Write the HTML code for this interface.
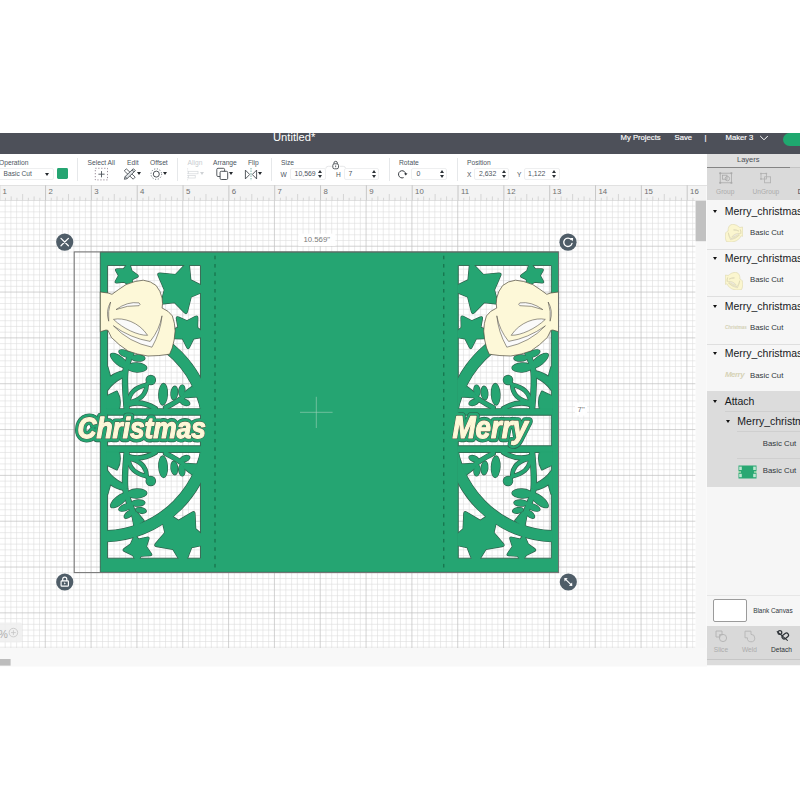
<!DOCTYPE html>
<html lang="en">
<head>
<meta charset="utf-8">
<title>Untitled* - Design Space</title>
<style>
html,body{margin:0;padding:0;}
body{width:800px;height:800px;position:relative;overflow:hidden;background:#fff;font-family:"Liberation Sans",sans-serif;color:#3c4248;}
.abs{position:absolute;}
#hdr{left:0;top:133px;width:800px;height:20.5px;background:#4d5059;}
#hdr span{position:absolute;color:#fff;font-size:7.7px;-webkit-text-stroke:0.15px #fff;line-height:10px;top:0px;white-space:nowrap;}
#title{font-size:11.2px !important;-webkit-text-stroke:0 !important;}
#go{position:absolute;left:782.5px;top:0;width:30px;height:13px;border-radius:7px;background:#1fa86f;}
#tb{left:0;top:153.5px;width:707px;height:31.5px;background:#fff;}
.lbl{position:absolute;top:4.3px;font-size:6.7px;line-height:9px;color:#4c5560;white-space:nowrap;}
.lbl.dis{color:#c9cdd1;}
.sm{position:absolute;top:16.4px;font-size:6.6px;line-height:9px;color:#4c5560;white-space:nowrap;}
.inp{position:absolute;top:14.8px;height:11.5px;border:0.6px solid #eeeff0;border-radius:2px;box-sizing:border-box;background:#fff;}
.inp b{position:absolute;left:3.6px;top:-0.5px;font-weight:normal;font-size:6.9px;line-height:9px;color:#4c5560;}
.inp i{position:absolute;right:1.9px;top:1.2px;width:4.4px;height:7.8px;}
.inp i:before,.inp i:after{content:"";position:absolute;left:0;border-left:2.2px solid transparent;border-right:2.2px solid transparent;}
.inp i:before{top:0;border-bottom:3.3px solid #2d3237;}
.inp i:after{bottom:0;border-top:3.3px solid #2d3237;}
.div{position:absolute;top:4.5px;width:1px;height:23px;background:#e6e8ea;}
.car{position:absolute;top:18.5px;width:0;height:0;border-left:2.2px solid transparent;border-right:2.2px solid transparent;border-top:3.4px solid #24282c;}
.car.dis{border-top-color:#cfd2d5;}
#canvas{left:0;top:185px;width:707px;height:481.5px;}
#panel{left:706.5px;top:153.5px;width:94px;height:512px;background:#f6f6f6;}
#panel .t{position:absolute;margin-top:1.1px;font-size:10.5px;line-height:13px;color:#16191c;white-space:nowrap;}
#panel .c{position:absolute;font-size:7.8px;line-height:10px;color:#30363b;white-space:nowrap;}
#panel .sep{position:absolute;height:1px;background:#dfdfdf;right:0;}
#panel .tri{position:absolute;width:0;height:0;border-left:2.6px solid transparent;border-right:2.6px solid transparent;border-top:3.2px solid #111;margin-top:0.2px;}
#panel .g{position:absolute;font-size:6.6px;line-height:9px;color:#acacac;white-space:nowrap;}
</style>
</head>
<body>
<div id="hdr" class="abs">
  <span id="title" style="left:273px;top:-1px;">Untitled*</span>
  <span style="left:620.5px;">My Projects</span>
  <span style="left:674.5px;">Save</span>
  <span style="left:704.5px;">|</span>
  <span style="left:725.5px;">Maker 3</span>
  <svg class="abs" style="left:759px;top:1px" width="10" height="8" viewBox="0 0 10 8"><path d="M1.2 2 L5 5.8 L8.8 2" fill="none" stroke="#fff" stroke-width="1"/></svg>
  <div id="go"></div>
</div>

<div id="tb" class="abs">
  <svg class="abs" style="left:0;top:0" width="707" height="31.5" viewBox="0 153.5 707 31.5">
  <!-- select all -->
  <rect x="95.300" y="167.800" width="12.200" height="11.600" fill="none" stroke="#8d7f8c" stroke-width="0.9" stroke-dasharray="1.200 1.775"/>
  <path d="M98.400 173.700h6.200M101.500 170.600v6.200" stroke="#4b5158" stroke-width="0.9" fill="none"/>
  <!-- edit -->
  <g stroke="#3a4046" stroke-width="0.8" fill="#fff" stroke-linejoin="round">
    <path d="M126.300 168.300l8.900 8.300l-2 2.100l-8.900-8.300z"/>
    <path d="M133.400 168.200l2 2l-8.400 8l-2.600 0.600l0.600-2.600z" fill="#dfe3e6"/>
    <path d="M132.100 169.400l2 2M127.100 178.100l-2-2" fill="none"/>
  </g>
  <!-- offset -->
  <circle cx="156.300" cy="173.600" r="3" fill="none" stroke="#3a4046" stroke-width="0.9"/>
  <circle cx="156.300" cy="173.600" r="5.300" fill="none" stroke="#59606a" stroke-width="1" stroke-dasharray="1 1.775"/>
  <!-- align (disabled) -->
  <path d="M187.600 167.800v12" stroke="#d9dcdf" stroke-width="0.8" stroke-dasharray="1.200 1" fill="none"/>
  <rect x="188.600" y="170.800" width="9.400" height="2.500" fill="none" stroke="#d4d8db" stroke-width="0.7"/>
  <rect x="188.600" y="175" width="6.600" height="2.500" fill="none" stroke="#d4d8db" stroke-width="0.7"/>
  <!-- arrange -->
  <rect x="216.800" y="167.800" width="7.800" height="8.200" rx="1.200" fill="#fff" stroke="#3a4046" stroke-width="0.85"/>
  <rect x="220.100" y="170.800" width="7.600" height="8.200" rx="1.200" fill="#fff" stroke="#3a4046" stroke-width="0.9"/>
  <!-- flip -->
  <path d="M245.400 169.600v8.800l4.300-4.400zM256.600 169.600v8.800l-4.300-4.400z" fill="#fff" stroke="#3a4046" stroke-width="0.85" stroke-linejoin="round"/>
  <path d="M251 167.500v12.600" stroke="#4f9a8c" stroke-width="0.8" stroke-dasharray="1.400 1.100" fill="none"/>
  <!-- lock + bracket -->
  <path d="M325.800 168.200q0-2.400 2.400-2.400h3.600M339.600 165.800h3.600q2.400 0 2.400 2.400" fill="none" stroke="#dfe1e3" stroke-width="0.8"/>
  <rect x="332.800" y="163.300" width="5.700" height="5" rx="1.600" fill="#fff" stroke="#3a4046" stroke-width="0.85"/>
  <path d="M333.900 163.300v-0.700a1.750 1.750 0 0 1 3.500 0v0.700" fill="none" stroke="#3a4046" stroke-width="0.85"/>
  <path d="M335.650 165v1.700" stroke="#3a4046" stroke-width="0.8"/>
  <!-- rotate -->
  <path d="M403.600 177.100a3.600 3.600 0 1 1 2.100-3.400" fill="none" stroke="#2d3237" stroke-width="0.95"/>
  <path d="M404 172.900l1.800 2.100l1.700-2.200z" fill="#2d3237"/>
</svg>
<div class="car" style="left:136.800px;"></div>
<div class="car" style="left:163.300px;"></div>
<div class="car dis" style="left:199.800px;"></div>
<div class="car" style="left:228.800px;"></div>
<div class="car" style="left:257.800px;"></div>

  <span class="lbl" style="left:-1px;">Operation</span>
  <div class="inp" style="left:-4px;width:57.5px;"><b style="left:6.6px;font-size:6.6px;">Basic Cut</b></div>
  <div class="car" style="left:45px;top:19px;"></div>
  <div class="abs" style="left:57px;top:14.3px;width:10.6px;height:11.2px;border-radius:1.4px;background:#25a572;"></div>
  <div class="div" style="left:77px;"></div>
  <span class="lbl" style="left:87.5px;">Select All</span>
  <span class="lbl" style="left:127px;">Edit</span>
  <span class="lbl" style="left:150px;">Offset</span>
  <div class="div" style="left:177px;"></div>
  <span class="lbl dis" style="left:187.5px;">Align</span>
  <span class="lbl" style="left:213px;">Arrange</span>
  <span class="lbl" style="left:248px;">Flip</span>
  <div class="div" style="left:271px;"></div>
  <span class="lbl" style="left:281px;">Size</span>
  <span class="sm" style="left:280.5px;">W</span>
  <div class="inp" style="left:290px;width:35.6px;"><b>10,569</b><i></i></div>
  <span class="sm" style="left:336px;">H</span>
  <div class="inp" style="left:343.8px;width:35.6px;"><b>7</b><i></i></div>
  <div class="div" style="left:389px;"></div>
  <span class="lbl" style="left:399px;">Rotate</span>
  <div class="inp" style="left:411px;width:36px;"><b style="left:4.6px">0</b><i></i></div>
  <div class="div" style="left:457px;"></div>
  <span class="lbl" style="left:467px;">Position</span>
  <span class="sm" style="left:467px;">X</span>
  <div class="inp" style="left:474.4px;width:35px;"><b>2,632</b><i></i></div>
  <span class="sm" style="left:517px;">Y</span>
  <div class="inp" style="left:523.5px;width:36px;"><b>1,122</b><i></i></div>
</div>

<div id="canvas" class="abs">
<svg id="cv" width="707" height="482" viewBox="0 185 707 482" style="position:absolute;left:0;top:0;font-family:'Liberation Sans',sans-serif">
  <defs>
    <pattern id="minor" x="-46.4" y="200.4" width="5.729" height="5.729" patternUnits="userSpaceOnUse">
      <path d="M0.25 0V5.729M0 0.25H5.729" stroke="#dcdcdc" stroke-width="0.6" fill="none"/>
    </pattern>
    <pattern id="major" x="-46.4" y="200.4" width="45.83" height="45.83" patternUnits="userSpaceOnUse">
      <path d="M0.3 0V45.83M0 0.3H45.83" stroke="#c4c4c4" stroke-width="0.8" fill="none"/>
    </pattern>
  </defs>
  <rect x="0" y="185" width="707" height="482" fill="#ffffff"/>
  <path d="M5.16 200.4V648M10.89 200.4V648M16.62 200.4V648M22.35 200.4V648M28.07 200.4V648M33.80 200.4V648M39.53 200.4V648M50.99 200.4V648M56.72 200.4V648M62.45 200.4V648M68.17 200.4V648M73.90 200.4V648M79.63 200.4V648M85.36 200.4V648M96.82 200.4V648M102.55 200.4V648M108.28 200.4V648M114.00 200.4V648M119.73 200.4V648M125.46 200.4V648M131.19 200.4V648M142.65 200.4V648M148.38 200.4V648M154.11 200.4V648M159.83 200.4V648M165.56 200.4V648M171.29 200.4V648M177.02 200.4V648M188.48 200.4V648M194.21 200.4V648M199.94 200.4V648M205.66 200.4V648M211.39 200.4V648M217.12 200.4V648M222.85 200.4V648M234.31 200.4V648M240.04 200.4V648M245.77 200.4V648M251.49 200.4V648M257.22 200.4V648M262.95 200.4V648M268.68 200.4V648M280.14 200.4V648M285.87 200.4V648M291.60 200.4V648M297.32 200.4V648M303.05 200.4V648M308.78 200.4V648M314.51 200.4V648M325.97 200.4V648M331.70 200.4V648M337.43 200.4V648M343.16 200.4V648M348.88 200.4V648M354.61 200.4V648M360.34 200.4V648M371.80 200.4V648M377.53 200.4V648M383.26 200.4V648M388.99 200.4V648M394.71 200.4V648M400.44 200.4V648M406.17 200.4V648M417.63 200.4V648M423.36 200.4V648M429.09 200.4V648M434.81 200.4V648M440.54 200.4V648M446.27 200.4V648M452.00 200.4V648M463.46 200.4V648M469.19 200.4V648M474.92 200.4V648M480.64 200.4V648M486.37 200.4V648M492.10 200.4V648M497.83 200.4V648M509.29 200.4V648M515.02 200.4V648M520.75 200.4V648M526.48 200.4V648M532.20 200.4V648M537.93 200.4V648M543.66 200.4V648M555.12 200.4V648M560.85 200.4V648M566.58 200.4V648M572.30 200.4V648M578.03 200.4V648M583.76 200.4V648M589.49 200.4V648M600.95 200.4V648M606.68 200.4V648M612.41 200.4V648M618.13 200.4V648M623.86 200.4V648M629.59 200.4V648M635.32 200.4V648M646.78 200.4V648M652.51 200.4V648M658.24 200.4V648M663.97 200.4V648M669.69 200.4V648M675.42 200.4V648M681.15 200.4V648M692.61 200.4V648M0 206.13H695.6M0 211.86H695.6M0 217.59H695.6M0 223.31H695.6M0 229.04H695.6M0 234.77H695.6M0 240.50H695.6M0 251.96H695.6M0 257.69H695.6M0 263.42H695.6M0 269.14H695.6M0 274.87H695.6M0 280.60H695.6M0 286.33H695.6M0 297.79H695.6M0 303.52H695.6M0 309.25H695.6M0 314.98H695.6M0 320.70H695.6M0 326.43H695.6M0 332.16H695.6M0 343.62H695.6M0 349.35H695.6M0 355.08H695.6M0 360.81H695.6M0 366.53H695.6M0 372.26H695.6M0 377.99H695.6M0 389.45H695.6M0 395.18H695.6M0 400.91H695.6M0 406.63H695.6M0 412.36H695.6M0 418.09H695.6M0 423.82H695.6M0 435.28H695.6M0 441.01H695.6M0 446.74H695.6M0 452.47H695.6M0 458.19H695.6M0 463.92H695.6M0 469.65H695.6M0 481.11H695.6M0 486.84H695.6M0 492.57H695.6M0 498.29H695.6M0 504.02H695.6M0 509.75H695.6M0 515.48H695.6M0 526.94H695.6M0 532.67H695.6M0 538.40H695.6M0 544.12H695.6M0 549.85H695.6M0 555.58H695.6M0 561.31H695.6M0 572.77H695.6M0 578.50H695.6M0 584.23H695.6M0 589.96H695.6M0 595.68H695.6M0 601.41H695.6M0 607.14H695.6M0 618.60H695.6M0 624.33H695.6M0 630.06H695.6M0 635.78H695.6M0 641.51H695.6M0 647.24H695.6" stroke="#dddddd" stroke-width="0.58" fill="none"/>
<path d="M45.26 200.4V648M91.09 200.4V648M136.92 200.4V648M182.75 200.4V648M228.58 200.4V648M274.41 200.4V648M320.24 200.4V648M366.07 200.4V648M411.90 200.4V648M457.73 200.4V648M503.56 200.4V648M549.39 200.4V648M595.22 200.4V648M641.05 200.4V648M686.88 200.4V648M0 200.40H695.6M0 246.23H695.6M0 292.06H695.6M0 337.89H695.6M0 383.72H695.6M0 429.55H695.6M0 475.38H695.6M0 521.21H695.6M0 567.04H695.6M0 612.87H695.6" stroke="#c0c0c0" stroke-width="0.7" fill="none"/>
  <rect x="0" y="185" width="706.5" height="15.3" fill="#f3f3f3"/>
<rect x="0" y="185" width="707" height="0.7" fill="#d9d9d9"/>
<path d="M5.46 197.8V200.4M11.19 196.4V200.4M16.92 197.8V200.4M22.65 194V200.4M28.37 197.8V200.4M34.10 196.4V200.4M39.83 197.8V200.4M51.29 197.8V200.4M57.02 196.4V200.4M62.75 197.8V200.4M68.47 194V200.4M74.20 197.8V200.4M79.93 196.4V200.4M85.66 197.8V200.4M97.12 197.8V200.4M102.85 196.4V200.4M108.58 197.8V200.4M114.30 194V200.4M120.03 197.8V200.4M125.76 196.4V200.4M131.49 197.8V200.4M142.95 197.8V200.4M148.68 196.4V200.4M154.41 197.8V200.4M160.13 194V200.4M165.86 197.8V200.4M171.59 196.4V200.4M177.32 197.8V200.4M188.78 197.8V200.4M194.51 196.4V200.4M200.24 197.8V200.4M205.97 194V200.4M211.69 197.8V200.4M217.42 196.4V200.4M223.15 197.8V200.4M234.61 197.8V200.4M240.34 196.4V200.4M246.07 197.8V200.4M251.79 194V200.4M257.52 197.8V200.4M263.25 196.4V200.4M268.98 197.8V200.4M280.44 197.8V200.4M286.17 196.4V200.4M291.90 197.8V200.4M297.62 194V200.4M303.35 197.8V200.4M309.08 196.4V200.4M314.81 197.8V200.4M326.27 197.8V200.4M332.00 196.4V200.4M337.73 197.8V200.4M343.46 194V200.4M349.18 197.8V200.4M354.91 196.4V200.4M360.64 197.8V200.4M372.10 197.8V200.4M377.83 196.4V200.4M383.56 197.8V200.4M389.29 194V200.4M395.01 197.8V200.4M400.74 196.4V200.4M406.47 197.8V200.4M417.93 197.8V200.4M423.66 196.4V200.4M429.39 197.8V200.4M435.12 194V200.4M440.84 197.8V200.4M446.57 196.4V200.4M452.30 197.8V200.4M463.76 197.8V200.4M469.49 196.4V200.4M475.22 197.8V200.4M480.94 194V200.4M486.67 197.8V200.4M492.40 196.4V200.4M498.13 197.8V200.4M509.59 197.8V200.4M515.32 196.4V200.4M521.05 197.8V200.4M526.77 194V200.4M532.50 197.8V200.4M538.23 196.4V200.4M543.96 197.8V200.4M555.42 197.8V200.4M561.15 196.4V200.4M566.88 197.8V200.4M572.60 194V200.4M578.33 197.8V200.4M584.06 196.4V200.4M589.79 197.8V200.4M601.25 197.8V200.4M606.98 196.4V200.4M612.71 197.8V200.4M618.43 194V200.4M624.16 197.8V200.4M629.89 196.4V200.4M635.62 197.8V200.4M647.08 197.8V200.4M652.81 196.4V200.4M658.54 197.8V200.4M664.26 194V200.4M669.99 197.8V200.4M675.72 196.4V200.4M681.45 197.8V200.4M692.91 197.8V200.4" stroke="#c9c9c9" stroke-width="0.7" fill="none"/>
<path d="M-0.27 185.3V200.4M45.56 185.3V200.4M91.39 185.3V200.4M137.22 185.3V200.4M183.05 185.3V200.4M228.88 185.3V200.4M274.71 185.3V200.4M320.54 185.3V200.4M366.37 185.3V200.4M412.20 185.3V200.4M458.03 185.3V200.4M503.86 185.3V200.4M549.69 185.3V200.4M595.52 185.3V200.4M641.35 185.3V200.4M687.18 185.3V200.4" stroke="#bdbdbd" stroke-width="0.8" fill="none"/>
<g font-size="7.8" fill="#6f6f6f"><text x="2.6" y="193.9">1</text><text x="48.5" y="193.9">2</text><text x="94.3" y="193.9">3</text><text x="140.1" y="193.9">4</text><text x="185.9" y="193.9">5</text><text x="231.8" y="193.9">6</text><text x="277.6" y="193.9">7</text><text x="323.4" y="193.9">8</text><text x="369.3" y="193.9">9</text><text x="415.1" y="193.9">10</text><text x="460.9" y="193.9">11</text><text x="506.8" y="193.9">12</text><text x="552.6" y="193.9">13</text><text x="598.4" y="193.9">14</text><text x="644.2" y="193.9">15</text><text x="690.1" y="193.9">16</text></g>
  <defs><clipPath id="winclip"><rect x="107.5" y="265.5" width="93.0" height="292.70000000000005"/></clipPath><clipPath id="winclip2"><rect x="106.7" y="264.7" width="94.6" height="294.30000000000007"/></clipPath></defs>
<path d="M100.3 252.0H558.5V572.3H100.3ZM107.5 265.5V558.2H200.5V265.5ZM458.29999999999995 265.5V558.2H551.3V265.5Z" fill="#25a572" fill-rule="evenodd" stroke="#33624e" stroke-width="0.9"/>
<g id="lp"><g clip-path="url(#winclip)">
<path d="M-8.600000000000009 430.5A111.2 111.2 0 1 0 213.8 430.5A111.2 111.2 0 1 0 -8.600000000000009 430.5ZM2.299999999999997 430.5A100.3 100.3 0 1 1 202.89999999999998 430.5A100.3 100.3 0 1 1 2.299999999999997 430.5Z" fill="#33624e" fill-rule="evenodd" stroke="#33624e" stroke-width="1.35"/>
<path d="M126.6 408 C125.8 398 124.2 384 125.3 372 C126.5 362 131.5 354 134.5 345 L137 336" fill="none" stroke="#33624e" stroke-width="6.35" stroke-linecap="round" stroke-linejoin="round"/>
<polygon points="136.2,349.3 143.6,340.2 134.4,333.7 132.6,346.7" fill="#33624e" stroke="#33624e" stroke-width="2.15" stroke-linejoin="round"/>
<ellipse cx="119.3" cy="360.8" rx="11.48" ry="4.77" transform="rotate(39 119.3 360.8)" fill="#33624e"/>
<ellipse cx="136.8" cy="367.5" rx="10.68" ry="5.17" transform="rotate(3 136.8 367.5)" fill="#33624e"/>
<ellipse cx="125.4" cy="353.6" rx="7.58" ry="3.67" transform="rotate(22 125.4 353.6)" fill="#33624e"/>
<ellipse cx="138.1" cy="358.0" rx="7.47" ry="3.78" transform="rotate(3 138.1 358.0)" fill="#33624e"/>
<ellipse cx="128.9" cy="346.9" rx="6.27" ry="3.38" transform="rotate(40 128.9 346.9)" fill="#33624e"/>
<ellipse cx="140.9" cy="350.6" rx="6.08" ry="3.38" transform="rotate(-10 140.9 350.6)" fill="#33624e"/>
<path d="M124 371 Q115.5 372.6 110.3 377 L107.5 367 L105 367 L105 390.6 L107.5 390 Q112.2 382.6 123.4 376.8 Z" fill="#33624e" stroke="#33624e" stroke-width="1.95" stroke-linejoin="round"/>
<path d="M105 397 L107.5 395.8 L116.9 391.4 Q121.6 399.5 118.9 409 L105 409 Z" fill="#33624e" stroke="#33624e" stroke-width="1.95" stroke-linejoin="round"/>
<path d="M128.3 402.6 Q129.6 388.2 146.6 384.8 Q146.2 399.4 128.3 402.6 Z" fill="none" stroke="#33624e" stroke-width="4.65" stroke-linecap="round" stroke-linejoin="round"/>
<path d="M146.4 385 L150.4 380.4" fill="none" stroke="#33624e" stroke-width="4.35" stroke-linecap="round" stroke-linejoin="round"/>
<ellipse cx="150.8" cy="380.0" rx="5.27" ry="5.27" transform="rotate(0 150.8 380.0)" fill="#33624e"/>
<path d="M126.4 405.2 Q140.5 399.6 155.4 408.6" fill="none" stroke="#33624e" stroke-width="5.35" stroke-linecap="round" stroke-linejoin="round"/>
<ellipse cx="163.1" cy="394.2" rx="4.97" ry="11.48" transform="rotate(3 163.1 394.2)" fill="#33624e"/>
<path d="M165.5 407.6 Q178.5 401.2 186.5 394.2 L193 389.6" fill="none" stroke="#33624e" stroke-width="5.35" stroke-linecap="round" stroke-linejoin="round"/>
<ellipse cx="174.3" cy="393.0" rx="3.97" ry="7.47" transform="rotate(6 174.3 393.0)" fill="#33624e"/>
<ellipse cx="181.8" cy="390.6" rx="3.67" ry="6.27" transform="rotate(9 181.8 390.6)" fill="#33624e"/>
<ellipse cx="184.8" cy="402.3" rx="5.88" ry="3.47" transform="rotate(21 184.8 402.3)" fill="#33624e"/>
<polygon points="183.4,393.4 192.4,386.6 198,396.4 186.2,397.2" fill="#33624e" stroke="#33624e" stroke-width="2.15" stroke-linejoin="round"/>
<path d="M105.5 409 H202.5 V414.8 H105.5 Z" fill="#33624e" stroke="#33624e" stroke-width="1.75" stroke-linejoin="round"/>
<g transform="matrix(1 0 0 -1 0 861.0)"><path d="M126.6 408 C125.8 398 124.2 384 125.3 372 C126.5 362 131.5 354 134.5 345 L137 336" fill="none" stroke="#33624e" stroke-width="6.35" stroke-linecap="round" stroke-linejoin="round"/>
<polygon points="136.2,349.3 143.6,340.2 134.4,333.7 132.6,346.7" fill="#33624e" stroke="#33624e" stroke-width="2.15" stroke-linejoin="round"/>
<ellipse cx="119.3" cy="360.8" rx="11.48" ry="4.77" transform="rotate(39 119.3 360.8)" fill="#33624e"/>
<ellipse cx="136.8" cy="367.5" rx="10.68" ry="5.17" transform="rotate(3 136.8 367.5)" fill="#33624e"/>
<ellipse cx="125.4" cy="353.6" rx="7.58" ry="3.67" transform="rotate(22 125.4 353.6)" fill="#33624e"/>
<ellipse cx="138.1" cy="358.0" rx="7.47" ry="3.78" transform="rotate(3 138.1 358.0)" fill="#33624e"/>
<ellipse cx="128.9" cy="346.9" rx="6.27" ry="3.38" transform="rotate(40 128.9 346.9)" fill="#33624e"/>
<ellipse cx="140.9" cy="350.6" rx="6.08" ry="3.38" transform="rotate(-10 140.9 350.6)" fill="#33624e"/>
<path d="M124 371 Q115.5 372.6 110.3 377 L107.5 367 L105 367 L105 390.6 L107.5 390 Q112.2 382.6 123.4 376.8 Z" fill="#33624e" stroke="#33624e" stroke-width="1.95" stroke-linejoin="round"/>
<path d="M105 397 L107.5 395.8 L116.9 391.4 Q121.6 399.5 118.9 409 L105 409 Z" fill="#33624e" stroke="#33624e" stroke-width="1.95" stroke-linejoin="round"/>
<path d="M128.3 402.6 Q129.6 388.2 146.6 384.8 Q146.2 399.4 128.3 402.6 Z" fill="none" stroke="#33624e" stroke-width="4.65" stroke-linecap="round" stroke-linejoin="round"/>
<path d="M146.4 385 L150.4 380.4" fill="none" stroke="#33624e" stroke-width="4.35" stroke-linecap="round" stroke-linejoin="round"/>
<ellipse cx="150.8" cy="380.0" rx="5.27" ry="5.27" transform="rotate(0 150.8 380.0)" fill="#33624e"/>
<path d="M126.4 405.2 Q140.5 399.6 155.4 408.6" fill="none" stroke="#33624e" stroke-width="5.35" stroke-linecap="round" stroke-linejoin="round"/>
<ellipse cx="163.1" cy="394.2" rx="4.97" ry="11.48" transform="rotate(3 163.1 394.2)" fill="#33624e"/>
<path d="M165.5 407.6 Q178.5 401.2 186.5 394.2 L193 389.6" fill="none" stroke="#33624e" stroke-width="5.35" stroke-linecap="round" stroke-linejoin="round"/>
<ellipse cx="174.3" cy="393.0" rx="3.97" ry="7.47" transform="rotate(6 174.3 393.0)" fill="#33624e"/>
<ellipse cx="181.8" cy="390.6" rx="3.67" ry="6.27" transform="rotate(9 181.8 390.6)" fill="#33624e"/>
<ellipse cx="184.8" cy="402.3" rx="5.88" ry="3.47" transform="rotate(21 184.8 402.3)" fill="#33624e"/>
<polygon points="183.4,393.4 192.4,386.6 198,396.4 186.2,397.2" fill="#33624e" stroke="#33624e" stroke-width="2.15" stroke-linejoin="round"/>
<path d="M105.5 409 H202.5 V414.8 H105.5 Z" fill="#33624e" stroke="#33624e" stroke-width="1.75" stroke-linejoin="round"/></g>
<path d="M129.00 261.50L131.75 270.75L137.19 274.68Q139.30 276.20 136.97 277.35L132.10 279.75L133.17 286.03Q133.50 288.00 131.80 286.94L123.90 282.00L116.98 282.80Q114.40 283.10 115.67 280.83L118.60 275.60L116.08 271.16Q114.80 268.90 117.40 268.90L123.50 268.90Z" fill="#33624e" stroke="#33624e" stroke-width="1.35" stroke-linejoin="round"/>
<path d="M186.60 263.00L189.10 263.00L190.70 279.90L204.00 286.40L204.00 291.60L191.10 296.90L187.38 311.70Q186.60 314.80 184.35 312.53L174.50 302.60L163.48 303.87Q160.60 304.20 161.35 301.40L164.40 290.00L158.27 275.84Q157.00 272.90 160.19 273.19L175.40 274.60Z" fill="#33624e" stroke="#33624e" stroke-width="1.35" stroke-linejoin="round"/>
<path d="M176.50 318.86Q176.00 316.00 178.66 317.15L187.00 320.75L195.22 316.53Q197.80 315.20 197.73 318.10L197.50 327.50L204.00 333.10L204.00 337.00L193.75 338.75L189.42 347.22Q188.10 349.80 186.79 347.21L182.50 338.75L168.00 338.40L168.00 331.00L178.00 327.50Z" fill="#33624e" stroke="#33624e" stroke-width="1.35" stroke-linejoin="round"/>
<path d="M135.00 534.00L138.50 539.20L146.96 537.35Q149.50 536.80 148.72 539.28L146.40 546.60L151.10 553.27Q152.60 555.40 150.01 555.58L141.10 556.20L137.00 563.00L132.80 555.40L124.44 551.34Q122.10 550.20 124.20 548.67L130.60 544.00Z" fill="#33624e" stroke="#33624e" stroke-width="1.35" stroke-linejoin="round"/>
<path d="M162.00 520.00L168.00 513.40L178.50 520.40L192.06 512.25Q194.80 510.60 194.94 513.80L195.60 528.70L204.00 536.20L204.00 545.00L191.60 547.50L186.00 562.00L180.70 562.00L172.80 549.25L156.76 546.53Q153.60 546.00 155.66 543.55L164.90 532.60Z" fill="#33624e" stroke="#33624e" stroke-width="1.35" stroke-linejoin="round"/>
</g>
<g clip-path="url(#winclip2)">
<path d="M-8.600000000000009 430.5A111.2 111.2 0 1 0 213.8 430.5A111.2 111.2 0 1 0 -8.600000000000009 430.5ZM2.299999999999997 430.5A100.3 100.3 0 1 1 202.89999999999998 430.5A100.3 100.3 0 1 1 2.299999999999997 430.5Z" fill="#25a572" fill-rule="evenodd" stroke="#25a572" stroke-width="0"/>
<path d="M126.6 408 C125.8 398 124.2 384 125.3 372 C126.5 362 131.5 354 134.5 345 L137 336" fill="none" stroke="#25a572" stroke-width="5.00" stroke-linecap="round" stroke-linejoin="round"/>
<polygon points="136.2,349.3 143.6,340.2 134.4,333.7 132.6,346.7" fill="#25a572" stroke="#25a572" stroke-width="0.80" stroke-linejoin="round"/>
<ellipse cx="119.3" cy="360.8" rx="10.80" ry="4.10" transform="rotate(39 119.3 360.8)" fill="#25a572"/>
<ellipse cx="136.8" cy="367.5" rx="10.00" ry="4.50" transform="rotate(3 136.8 367.5)" fill="#25a572"/>
<ellipse cx="125.4" cy="353.6" rx="6.90" ry="3.00" transform="rotate(22 125.4 353.6)" fill="#25a572"/>
<ellipse cx="138.1" cy="358.0" rx="6.80" ry="3.10" transform="rotate(3 138.1 358.0)" fill="#25a572"/>
<ellipse cx="128.9" cy="346.9" rx="5.60" ry="2.70" transform="rotate(40 128.9 346.9)" fill="#25a572"/>
<ellipse cx="140.9" cy="350.6" rx="5.40" ry="2.70" transform="rotate(-10 140.9 350.6)" fill="#25a572"/>
<path d="M124 371 Q115.5 372.6 110.3 377 L107.5 367 L105 367 L105 390.6 L107.5 390 Q112.2 382.6 123.4 376.8 Z" fill="#25a572" stroke="#25a572" stroke-width="0.60" stroke-linejoin="round"/>
<path d="M105 397 L107.5 395.8 L116.9 391.4 Q121.6 399.5 118.9 409 L105 409 Z" fill="#25a572" stroke="#25a572" stroke-width="0.60" stroke-linejoin="round"/>
<path d="M128.3 402.6 Q129.6 388.2 146.6 384.8 Q146.2 399.4 128.3 402.6 Z" fill="none" stroke="#25a572" stroke-width="3.30" stroke-linecap="round" stroke-linejoin="round"/>
<path d="M146.4 385 L150.4 380.4" fill="none" stroke="#25a572" stroke-width="3.00" stroke-linecap="round" stroke-linejoin="round"/>
<ellipse cx="150.8" cy="380.0" rx="4.60" ry="4.60" transform="rotate(0 150.8 380.0)" fill="#25a572"/>
<path d="M126.4 405.2 Q140.5 399.6 155.4 408.6" fill="none" stroke="#25a572" stroke-width="4.00" stroke-linecap="round" stroke-linejoin="round"/>
<ellipse cx="163.1" cy="394.2" rx="4.30" ry="10.80" transform="rotate(3 163.1 394.2)" fill="#25a572"/>
<path d="M165.5 407.6 Q178.5 401.2 186.5 394.2 L193 389.6" fill="none" stroke="#25a572" stroke-width="4.00" stroke-linecap="round" stroke-linejoin="round"/>
<ellipse cx="174.3" cy="393.0" rx="3.30" ry="6.80" transform="rotate(6 174.3 393.0)" fill="#25a572"/>
<ellipse cx="181.8" cy="390.6" rx="3.00" ry="5.60" transform="rotate(9 181.8 390.6)" fill="#25a572"/>
<ellipse cx="184.8" cy="402.3" rx="5.20" ry="2.80" transform="rotate(21 184.8 402.3)" fill="#25a572"/>
<polygon points="183.4,393.4 192.4,386.6 198,396.4 186.2,397.2" fill="#25a572" stroke="#25a572" stroke-width="0.80" stroke-linejoin="round"/>
<path d="M105.5 409 H202.5 V414.8 H105.5 Z" fill="#25a572" stroke="#25a572" stroke-width="0.40" stroke-linejoin="round"/>
<g transform="matrix(1 0 0 -1 0 861.0)"><path d="M126.6 408 C125.8 398 124.2 384 125.3 372 C126.5 362 131.5 354 134.5 345 L137 336" fill="none" stroke="#25a572" stroke-width="5.00" stroke-linecap="round" stroke-linejoin="round"/>
<polygon points="136.2,349.3 143.6,340.2 134.4,333.7 132.6,346.7" fill="#25a572" stroke="#25a572" stroke-width="0.80" stroke-linejoin="round"/>
<ellipse cx="119.3" cy="360.8" rx="10.80" ry="4.10" transform="rotate(39 119.3 360.8)" fill="#25a572"/>
<ellipse cx="136.8" cy="367.5" rx="10.00" ry="4.50" transform="rotate(3 136.8 367.5)" fill="#25a572"/>
<ellipse cx="125.4" cy="353.6" rx="6.90" ry="3.00" transform="rotate(22 125.4 353.6)" fill="#25a572"/>
<ellipse cx="138.1" cy="358.0" rx="6.80" ry="3.10" transform="rotate(3 138.1 358.0)" fill="#25a572"/>
<ellipse cx="128.9" cy="346.9" rx="5.60" ry="2.70" transform="rotate(40 128.9 346.9)" fill="#25a572"/>
<ellipse cx="140.9" cy="350.6" rx="5.40" ry="2.70" transform="rotate(-10 140.9 350.6)" fill="#25a572"/>
<path d="M124 371 Q115.5 372.6 110.3 377 L107.5 367 L105 367 L105 390.6 L107.5 390 Q112.2 382.6 123.4 376.8 Z" fill="#25a572" stroke="#25a572" stroke-width="0.60" stroke-linejoin="round"/>
<path d="M105 397 L107.5 395.8 L116.9 391.4 Q121.6 399.5 118.9 409 L105 409 Z" fill="#25a572" stroke="#25a572" stroke-width="0.60" stroke-linejoin="round"/>
<path d="M128.3 402.6 Q129.6 388.2 146.6 384.8 Q146.2 399.4 128.3 402.6 Z" fill="none" stroke="#25a572" stroke-width="3.30" stroke-linecap="round" stroke-linejoin="round"/>
<path d="M146.4 385 L150.4 380.4" fill="none" stroke="#25a572" stroke-width="3.00" stroke-linecap="round" stroke-linejoin="round"/>
<ellipse cx="150.8" cy="380.0" rx="4.60" ry="4.60" transform="rotate(0 150.8 380.0)" fill="#25a572"/>
<path d="M126.4 405.2 Q140.5 399.6 155.4 408.6" fill="none" stroke="#25a572" stroke-width="4.00" stroke-linecap="round" stroke-linejoin="round"/>
<ellipse cx="163.1" cy="394.2" rx="4.30" ry="10.80" transform="rotate(3 163.1 394.2)" fill="#25a572"/>
<path d="M165.5 407.6 Q178.5 401.2 186.5 394.2 L193 389.6" fill="none" stroke="#25a572" stroke-width="4.00" stroke-linecap="round" stroke-linejoin="round"/>
<ellipse cx="174.3" cy="393.0" rx="3.30" ry="6.80" transform="rotate(6 174.3 393.0)" fill="#25a572"/>
<ellipse cx="181.8" cy="390.6" rx="3.00" ry="5.60" transform="rotate(9 181.8 390.6)" fill="#25a572"/>
<ellipse cx="184.8" cy="402.3" rx="5.20" ry="2.80" transform="rotate(21 184.8 402.3)" fill="#25a572"/>
<polygon points="183.4,393.4 192.4,386.6 198,396.4 186.2,397.2" fill="#25a572" stroke="#25a572" stroke-width="0.80" stroke-linejoin="round"/>
<path d="M105.5 409 H202.5 V414.8 H105.5 Z" fill="#25a572" stroke="#25a572" stroke-width="0.40" stroke-linejoin="round"/></g>
<path d="M129.00 261.50L131.75 270.75L137.19 274.68Q139.30 276.20 136.97 277.35L132.10 279.75L133.17 286.03Q133.50 288.00 131.80 286.94L123.90 282.00L116.98 282.80Q114.40 283.10 115.67 280.83L118.60 275.60L116.08 271.16Q114.80 268.90 117.40 268.90L123.50 268.90Z" fill="#25a572" stroke="#25a572" stroke-width="0.00" stroke-linejoin="round"/>
<path d="M186.60 263.00L189.10 263.00L190.70 279.90L204.00 286.40L204.00 291.60L191.10 296.90L187.38 311.70Q186.60 314.80 184.35 312.53L174.50 302.60L163.48 303.87Q160.60 304.20 161.35 301.40L164.40 290.00L158.27 275.84Q157.00 272.90 160.19 273.19L175.40 274.60Z" fill="#25a572" stroke="#25a572" stroke-width="0.00" stroke-linejoin="round"/>
<path d="M176.50 318.86Q176.00 316.00 178.66 317.15L187.00 320.75L195.22 316.53Q197.80 315.20 197.73 318.10L197.50 327.50L204.00 333.10L204.00 337.00L193.75 338.75L189.42 347.22Q188.10 349.80 186.79 347.21L182.50 338.75L168.00 338.40L168.00 331.00L178.00 327.50Z" fill="#25a572" stroke="#25a572" stroke-width="0.00" stroke-linejoin="round"/>
<path d="M135.00 534.00L138.50 539.20L146.96 537.35Q149.50 536.80 148.72 539.28L146.40 546.60L151.10 553.27Q152.60 555.40 150.01 555.58L141.10 556.20L137.00 563.00L132.80 555.40L124.44 551.34Q122.10 550.20 124.20 548.67L130.60 544.00Z" fill="#25a572" stroke="#25a572" stroke-width="0.00" stroke-linejoin="round"/>
<path d="M162.00 520.00L168.00 513.40L178.50 520.40L192.06 512.25Q194.80 510.60 194.94 513.80L195.60 528.70L204.00 536.20L204.00 545.00L191.60 547.50L186.00 562.00L180.70 562.00L172.80 549.25L156.76 546.53Q153.60 546.00 155.66 543.55L164.90 532.60Z" fill="#25a572" stroke="#25a572" stroke-width="0.00" stroke-linejoin="round"/>
</g>
<path d="M100.3 292.0 L108 293.0 L112 294.3 Q118.5 289.4 126 284.6 Q135.5 280.6 143.2 280.2 Q151 281 156.2 285.6 Q160.6 291 162.1 298 Q163 304 162.1 308.1 L163 308.5 Q168.6 310.6 172.4 316 Q175 323 175.1 331 Q174.6 340.5 172.2 348 L169.6 354.2 Q159 356 148 356 Q137 354.6 128 351 Q118.6 345 111.4 337.4 L108 330.4 L106 330 L100.3 331.7 Z" fill="#fdf8d8" stroke="#4f4b3c" stroke-width="0.7" stroke-linejoin="round"/>
<path d="M110.6 302.0 Q105.4 311 108.7 321.2 Q107.7 311 110.6 302.0 ZM116.0 309.6 Q127.5 301.2 139 302.9 Q141.2 304.3 139 305.7 Q127.5 305.0 116.0 309.6 ZM113.5 319.4 C123 317.2 139 322 147.6 335.3 C138 335.6 123 328.6 113.5 319.4 ZM113.4 325.8 Q129 342.5 152 347.2 Q160.5 332 162.0 315.8 Q159.4 330 150.2 341.4 Q130.5 338.2 113.4 325.8 Z" fill="#fafafa" stroke="#55524a" stroke-width="0.6" stroke-linejoin="round"/></g>
<g transform="matrix(-1 0 0 1 658.8 0)"><g clip-path="url(#winclip)">
<path d="M-8.600000000000009 430.5A111.2 111.2 0 1 0 213.8 430.5A111.2 111.2 0 1 0 -8.600000000000009 430.5ZM2.299999999999997 430.5A100.3 100.3 0 1 1 202.89999999999998 430.5A100.3 100.3 0 1 1 2.299999999999997 430.5Z" fill="#33624e" fill-rule="evenodd" stroke="#33624e" stroke-width="1.35"/>
<path d="M126.6 408 C125.8 398 124.2 384 125.3 372 C126.5 362 131.5 354 134.5 345 L137 336" fill="none" stroke="#33624e" stroke-width="6.35" stroke-linecap="round" stroke-linejoin="round"/>
<polygon points="136.2,349.3 143.6,340.2 134.4,333.7 132.6,346.7" fill="#33624e" stroke="#33624e" stroke-width="2.15" stroke-linejoin="round"/>
<ellipse cx="119.3" cy="360.8" rx="11.48" ry="4.77" transform="rotate(39 119.3 360.8)" fill="#33624e"/>
<ellipse cx="136.8" cy="367.5" rx="10.68" ry="5.17" transform="rotate(3 136.8 367.5)" fill="#33624e"/>
<ellipse cx="125.4" cy="353.6" rx="7.58" ry="3.67" transform="rotate(22 125.4 353.6)" fill="#33624e"/>
<ellipse cx="138.1" cy="358.0" rx="7.47" ry="3.78" transform="rotate(3 138.1 358.0)" fill="#33624e"/>
<ellipse cx="128.9" cy="346.9" rx="6.27" ry="3.38" transform="rotate(40 128.9 346.9)" fill="#33624e"/>
<ellipse cx="140.9" cy="350.6" rx="6.08" ry="3.38" transform="rotate(-10 140.9 350.6)" fill="#33624e"/>
<path d="M124 371 Q115.5 372.6 110.3 377 L107.5 367 L105 367 L105 390.6 L107.5 390 Q112.2 382.6 123.4 376.8 Z" fill="#33624e" stroke="#33624e" stroke-width="1.95" stroke-linejoin="round"/>
<path d="M105 397 L107.5 395.8 L116.9 391.4 Q121.6 399.5 118.9 409 L105 409 Z" fill="#33624e" stroke="#33624e" stroke-width="1.95" stroke-linejoin="round"/>
<path d="M128.3 402.6 Q129.6 388.2 146.6 384.8 Q146.2 399.4 128.3 402.6 Z" fill="none" stroke="#33624e" stroke-width="4.65" stroke-linecap="round" stroke-linejoin="round"/>
<path d="M146.4 385 L150.4 380.4" fill="none" stroke="#33624e" stroke-width="4.35" stroke-linecap="round" stroke-linejoin="round"/>
<ellipse cx="150.8" cy="380.0" rx="5.27" ry="5.27" transform="rotate(0 150.8 380.0)" fill="#33624e"/>
<path d="M126.4 405.2 Q140.5 399.6 155.4 408.6" fill="none" stroke="#33624e" stroke-width="5.35" stroke-linecap="round" stroke-linejoin="round"/>
<ellipse cx="163.1" cy="394.2" rx="4.97" ry="11.48" transform="rotate(3 163.1 394.2)" fill="#33624e"/>
<path d="M165.5 407.6 Q178.5 401.2 186.5 394.2 L193 389.6" fill="none" stroke="#33624e" stroke-width="5.35" stroke-linecap="round" stroke-linejoin="round"/>
<ellipse cx="174.3" cy="393.0" rx="3.97" ry="7.47" transform="rotate(6 174.3 393.0)" fill="#33624e"/>
<ellipse cx="181.8" cy="390.6" rx="3.67" ry="6.27" transform="rotate(9 181.8 390.6)" fill="#33624e"/>
<ellipse cx="184.8" cy="402.3" rx="5.88" ry="3.47" transform="rotate(21 184.8 402.3)" fill="#33624e"/>
<polygon points="183.4,393.4 192.4,386.6 198,396.4 186.2,397.2" fill="#33624e" stroke="#33624e" stroke-width="2.15" stroke-linejoin="round"/>
<path d="M105.5 409 H202.5 V414.8 H105.5 Z" fill="#33624e" stroke="#33624e" stroke-width="1.75" stroke-linejoin="round"/>
<g transform="matrix(1 0 0 -1 0 861.0)"><path d="M126.6 408 C125.8 398 124.2 384 125.3 372 C126.5 362 131.5 354 134.5 345 L137 336" fill="none" stroke="#33624e" stroke-width="6.35" stroke-linecap="round" stroke-linejoin="round"/>
<polygon points="136.2,349.3 143.6,340.2 134.4,333.7 132.6,346.7" fill="#33624e" stroke="#33624e" stroke-width="2.15" stroke-linejoin="round"/>
<ellipse cx="119.3" cy="360.8" rx="11.48" ry="4.77" transform="rotate(39 119.3 360.8)" fill="#33624e"/>
<ellipse cx="136.8" cy="367.5" rx="10.68" ry="5.17" transform="rotate(3 136.8 367.5)" fill="#33624e"/>
<ellipse cx="125.4" cy="353.6" rx="7.58" ry="3.67" transform="rotate(22 125.4 353.6)" fill="#33624e"/>
<ellipse cx="138.1" cy="358.0" rx="7.47" ry="3.78" transform="rotate(3 138.1 358.0)" fill="#33624e"/>
<ellipse cx="128.9" cy="346.9" rx="6.27" ry="3.38" transform="rotate(40 128.9 346.9)" fill="#33624e"/>
<ellipse cx="140.9" cy="350.6" rx="6.08" ry="3.38" transform="rotate(-10 140.9 350.6)" fill="#33624e"/>
<path d="M124 371 Q115.5 372.6 110.3 377 L107.5 367 L105 367 L105 390.6 L107.5 390 Q112.2 382.6 123.4 376.8 Z" fill="#33624e" stroke="#33624e" stroke-width="1.95" stroke-linejoin="round"/>
<path d="M105 397 L107.5 395.8 L116.9 391.4 Q121.6 399.5 118.9 409 L105 409 Z" fill="#33624e" stroke="#33624e" stroke-width="1.95" stroke-linejoin="round"/>
<path d="M128.3 402.6 Q129.6 388.2 146.6 384.8 Q146.2 399.4 128.3 402.6 Z" fill="none" stroke="#33624e" stroke-width="4.65" stroke-linecap="round" stroke-linejoin="round"/>
<path d="M146.4 385 L150.4 380.4" fill="none" stroke="#33624e" stroke-width="4.35" stroke-linecap="round" stroke-linejoin="round"/>
<ellipse cx="150.8" cy="380.0" rx="5.27" ry="5.27" transform="rotate(0 150.8 380.0)" fill="#33624e"/>
<path d="M126.4 405.2 Q140.5 399.6 155.4 408.6" fill="none" stroke="#33624e" stroke-width="5.35" stroke-linecap="round" stroke-linejoin="round"/>
<ellipse cx="163.1" cy="394.2" rx="4.97" ry="11.48" transform="rotate(3 163.1 394.2)" fill="#33624e"/>
<path d="M165.5 407.6 Q178.5 401.2 186.5 394.2 L193 389.6" fill="none" stroke="#33624e" stroke-width="5.35" stroke-linecap="round" stroke-linejoin="round"/>
<ellipse cx="174.3" cy="393.0" rx="3.97" ry="7.47" transform="rotate(6 174.3 393.0)" fill="#33624e"/>
<ellipse cx="181.8" cy="390.6" rx="3.67" ry="6.27" transform="rotate(9 181.8 390.6)" fill="#33624e"/>
<ellipse cx="184.8" cy="402.3" rx="5.88" ry="3.47" transform="rotate(21 184.8 402.3)" fill="#33624e"/>
<polygon points="183.4,393.4 192.4,386.6 198,396.4 186.2,397.2" fill="#33624e" stroke="#33624e" stroke-width="2.15" stroke-linejoin="round"/>
<path d="M105.5 409 H202.5 V414.8 H105.5 Z" fill="#33624e" stroke="#33624e" stroke-width="1.75" stroke-linejoin="round"/></g>
<path d="M129.00 261.50L131.75 270.75L137.19 274.68Q139.30 276.20 136.97 277.35L132.10 279.75L133.17 286.03Q133.50 288.00 131.80 286.94L123.90 282.00L116.98 282.80Q114.40 283.10 115.67 280.83L118.60 275.60L116.08 271.16Q114.80 268.90 117.40 268.90L123.50 268.90Z" fill="#33624e" stroke="#33624e" stroke-width="1.35" stroke-linejoin="round"/>
<path d="M186.60 263.00L189.10 263.00L190.70 279.90L204.00 286.40L204.00 291.60L191.10 296.90L187.38 311.70Q186.60 314.80 184.35 312.53L174.50 302.60L163.48 303.87Q160.60 304.20 161.35 301.40L164.40 290.00L158.27 275.84Q157.00 272.90 160.19 273.19L175.40 274.60Z" fill="#33624e" stroke="#33624e" stroke-width="1.35" stroke-linejoin="round"/>
<path d="M176.50 318.86Q176.00 316.00 178.66 317.15L187.00 320.75L195.22 316.53Q197.80 315.20 197.73 318.10L197.50 327.50L204.00 333.10L204.00 337.00L193.75 338.75L189.42 347.22Q188.10 349.80 186.79 347.21L182.50 338.75L168.00 338.40L168.00 331.00L178.00 327.50Z" fill="#33624e" stroke="#33624e" stroke-width="1.35" stroke-linejoin="round"/>
<path d="M135.00 534.00L138.50 539.20L146.96 537.35Q149.50 536.80 148.72 539.28L146.40 546.60L151.10 553.27Q152.60 555.40 150.01 555.58L141.10 556.20L137.00 563.00L132.80 555.40L124.44 551.34Q122.10 550.20 124.20 548.67L130.60 544.00Z" fill="#33624e" stroke="#33624e" stroke-width="1.35" stroke-linejoin="round"/>
<path d="M162.00 520.00L168.00 513.40L178.50 520.40L192.06 512.25Q194.80 510.60 194.94 513.80L195.60 528.70L204.00 536.20L204.00 545.00L191.60 547.50L186.00 562.00L180.70 562.00L172.80 549.25L156.76 546.53Q153.60 546.00 155.66 543.55L164.90 532.60Z" fill="#33624e" stroke="#33624e" stroke-width="1.35" stroke-linejoin="round"/>
</g>
<g clip-path="url(#winclip2)">
<path d="M-8.600000000000009 430.5A111.2 111.2 0 1 0 213.8 430.5A111.2 111.2 0 1 0 -8.600000000000009 430.5ZM2.299999999999997 430.5A100.3 100.3 0 1 1 202.89999999999998 430.5A100.3 100.3 0 1 1 2.299999999999997 430.5Z" fill="#25a572" fill-rule="evenodd" stroke="#25a572" stroke-width="0"/>
<path d="M126.6 408 C125.8 398 124.2 384 125.3 372 C126.5 362 131.5 354 134.5 345 L137 336" fill="none" stroke="#25a572" stroke-width="5.00" stroke-linecap="round" stroke-linejoin="round"/>
<polygon points="136.2,349.3 143.6,340.2 134.4,333.7 132.6,346.7" fill="#25a572" stroke="#25a572" stroke-width="0.80" stroke-linejoin="round"/>
<ellipse cx="119.3" cy="360.8" rx="10.80" ry="4.10" transform="rotate(39 119.3 360.8)" fill="#25a572"/>
<ellipse cx="136.8" cy="367.5" rx="10.00" ry="4.50" transform="rotate(3 136.8 367.5)" fill="#25a572"/>
<ellipse cx="125.4" cy="353.6" rx="6.90" ry="3.00" transform="rotate(22 125.4 353.6)" fill="#25a572"/>
<ellipse cx="138.1" cy="358.0" rx="6.80" ry="3.10" transform="rotate(3 138.1 358.0)" fill="#25a572"/>
<ellipse cx="128.9" cy="346.9" rx="5.60" ry="2.70" transform="rotate(40 128.9 346.9)" fill="#25a572"/>
<ellipse cx="140.9" cy="350.6" rx="5.40" ry="2.70" transform="rotate(-10 140.9 350.6)" fill="#25a572"/>
<path d="M124 371 Q115.5 372.6 110.3 377 L107.5 367 L105 367 L105 390.6 L107.5 390 Q112.2 382.6 123.4 376.8 Z" fill="#25a572" stroke="#25a572" stroke-width="0.60" stroke-linejoin="round"/>
<path d="M105 397 L107.5 395.8 L116.9 391.4 Q121.6 399.5 118.9 409 L105 409 Z" fill="#25a572" stroke="#25a572" stroke-width="0.60" stroke-linejoin="round"/>
<path d="M128.3 402.6 Q129.6 388.2 146.6 384.8 Q146.2 399.4 128.3 402.6 Z" fill="none" stroke="#25a572" stroke-width="3.30" stroke-linecap="round" stroke-linejoin="round"/>
<path d="M146.4 385 L150.4 380.4" fill="none" stroke="#25a572" stroke-width="3.00" stroke-linecap="round" stroke-linejoin="round"/>
<ellipse cx="150.8" cy="380.0" rx="4.60" ry="4.60" transform="rotate(0 150.8 380.0)" fill="#25a572"/>
<path d="M126.4 405.2 Q140.5 399.6 155.4 408.6" fill="none" stroke="#25a572" stroke-width="4.00" stroke-linecap="round" stroke-linejoin="round"/>
<ellipse cx="163.1" cy="394.2" rx="4.30" ry="10.80" transform="rotate(3 163.1 394.2)" fill="#25a572"/>
<path d="M165.5 407.6 Q178.5 401.2 186.5 394.2 L193 389.6" fill="none" stroke="#25a572" stroke-width="4.00" stroke-linecap="round" stroke-linejoin="round"/>
<ellipse cx="174.3" cy="393.0" rx="3.30" ry="6.80" transform="rotate(6 174.3 393.0)" fill="#25a572"/>
<ellipse cx="181.8" cy="390.6" rx="3.00" ry="5.60" transform="rotate(9 181.8 390.6)" fill="#25a572"/>
<ellipse cx="184.8" cy="402.3" rx="5.20" ry="2.80" transform="rotate(21 184.8 402.3)" fill="#25a572"/>
<polygon points="183.4,393.4 192.4,386.6 198,396.4 186.2,397.2" fill="#25a572" stroke="#25a572" stroke-width="0.80" stroke-linejoin="round"/>
<path d="M105.5 409 H202.5 V414.8 H105.5 Z" fill="#25a572" stroke="#25a572" stroke-width="0.40" stroke-linejoin="round"/>
<g transform="matrix(1 0 0 -1 0 861.0)"><path d="M126.6 408 C125.8 398 124.2 384 125.3 372 C126.5 362 131.5 354 134.5 345 L137 336" fill="none" stroke="#25a572" stroke-width="5.00" stroke-linecap="round" stroke-linejoin="round"/>
<polygon points="136.2,349.3 143.6,340.2 134.4,333.7 132.6,346.7" fill="#25a572" stroke="#25a572" stroke-width="0.80" stroke-linejoin="round"/>
<ellipse cx="119.3" cy="360.8" rx="10.80" ry="4.10" transform="rotate(39 119.3 360.8)" fill="#25a572"/>
<ellipse cx="136.8" cy="367.5" rx="10.00" ry="4.50" transform="rotate(3 136.8 367.5)" fill="#25a572"/>
<ellipse cx="125.4" cy="353.6" rx="6.90" ry="3.00" transform="rotate(22 125.4 353.6)" fill="#25a572"/>
<ellipse cx="138.1" cy="358.0" rx="6.80" ry="3.10" transform="rotate(3 138.1 358.0)" fill="#25a572"/>
<ellipse cx="128.9" cy="346.9" rx="5.60" ry="2.70" transform="rotate(40 128.9 346.9)" fill="#25a572"/>
<ellipse cx="140.9" cy="350.6" rx="5.40" ry="2.70" transform="rotate(-10 140.9 350.6)" fill="#25a572"/>
<path d="M124 371 Q115.5 372.6 110.3 377 L107.5 367 L105 367 L105 390.6 L107.5 390 Q112.2 382.6 123.4 376.8 Z" fill="#25a572" stroke="#25a572" stroke-width="0.60" stroke-linejoin="round"/>
<path d="M105 397 L107.5 395.8 L116.9 391.4 Q121.6 399.5 118.9 409 L105 409 Z" fill="#25a572" stroke="#25a572" stroke-width="0.60" stroke-linejoin="round"/>
<path d="M128.3 402.6 Q129.6 388.2 146.6 384.8 Q146.2 399.4 128.3 402.6 Z" fill="none" stroke="#25a572" stroke-width="3.30" stroke-linecap="round" stroke-linejoin="round"/>
<path d="M146.4 385 L150.4 380.4" fill="none" stroke="#25a572" stroke-width="3.00" stroke-linecap="round" stroke-linejoin="round"/>
<ellipse cx="150.8" cy="380.0" rx="4.60" ry="4.60" transform="rotate(0 150.8 380.0)" fill="#25a572"/>
<path d="M126.4 405.2 Q140.5 399.6 155.4 408.6" fill="none" stroke="#25a572" stroke-width="4.00" stroke-linecap="round" stroke-linejoin="round"/>
<ellipse cx="163.1" cy="394.2" rx="4.30" ry="10.80" transform="rotate(3 163.1 394.2)" fill="#25a572"/>
<path d="M165.5 407.6 Q178.5 401.2 186.5 394.2 L193 389.6" fill="none" stroke="#25a572" stroke-width="4.00" stroke-linecap="round" stroke-linejoin="round"/>
<ellipse cx="174.3" cy="393.0" rx="3.30" ry="6.80" transform="rotate(6 174.3 393.0)" fill="#25a572"/>
<ellipse cx="181.8" cy="390.6" rx="3.00" ry="5.60" transform="rotate(9 181.8 390.6)" fill="#25a572"/>
<ellipse cx="184.8" cy="402.3" rx="5.20" ry="2.80" transform="rotate(21 184.8 402.3)" fill="#25a572"/>
<polygon points="183.4,393.4 192.4,386.6 198,396.4 186.2,397.2" fill="#25a572" stroke="#25a572" stroke-width="0.80" stroke-linejoin="round"/>
<path d="M105.5 409 H202.5 V414.8 H105.5 Z" fill="#25a572" stroke="#25a572" stroke-width="0.40" stroke-linejoin="round"/></g>
<path d="M129.00 261.50L131.75 270.75L137.19 274.68Q139.30 276.20 136.97 277.35L132.10 279.75L133.17 286.03Q133.50 288.00 131.80 286.94L123.90 282.00L116.98 282.80Q114.40 283.10 115.67 280.83L118.60 275.60L116.08 271.16Q114.80 268.90 117.40 268.90L123.50 268.90Z" fill="#25a572" stroke="#25a572" stroke-width="0.00" stroke-linejoin="round"/>
<path d="M186.60 263.00L189.10 263.00L190.70 279.90L204.00 286.40L204.00 291.60L191.10 296.90L187.38 311.70Q186.60 314.80 184.35 312.53L174.50 302.60L163.48 303.87Q160.60 304.20 161.35 301.40L164.40 290.00L158.27 275.84Q157.00 272.90 160.19 273.19L175.40 274.60Z" fill="#25a572" stroke="#25a572" stroke-width="0.00" stroke-linejoin="round"/>
<path d="M176.50 318.86Q176.00 316.00 178.66 317.15L187.00 320.75L195.22 316.53Q197.80 315.20 197.73 318.10L197.50 327.50L204.00 333.10L204.00 337.00L193.75 338.75L189.42 347.22Q188.10 349.80 186.79 347.21L182.50 338.75L168.00 338.40L168.00 331.00L178.00 327.50Z" fill="#25a572" stroke="#25a572" stroke-width="0.00" stroke-linejoin="round"/>
<path d="M135.00 534.00L138.50 539.20L146.96 537.35Q149.50 536.80 148.72 539.28L146.40 546.60L151.10 553.27Q152.60 555.40 150.01 555.58L141.10 556.20L137.00 563.00L132.80 555.40L124.44 551.34Q122.10 550.20 124.20 548.67L130.60 544.00Z" fill="#25a572" stroke="#25a572" stroke-width="0.00" stroke-linejoin="round"/>
<path d="M162.00 520.00L168.00 513.40L178.50 520.40L192.06 512.25Q194.80 510.60 194.94 513.80L195.60 528.70L204.00 536.20L204.00 545.00L191.60 547.50L186.00 562.00L180.70 562.00L172.80 549.25L156.76 546.53Q153.60 546.00 155.66 543.55L164.90 532.60Z" fill="#25a572" stroke="#25a572" stroke-width="0.00" stroke-linejoin="round"/>
</g>
<path d="M100.3 292.0 L108 293.0 L112 294.3 Q118.5 289.4 126 284.6 Q135.5 280.6 143.2 280.2 Q151 281 156.2 285.6 Q160.6 291 162.1 298 Q163 304 162.1 308.1 L163 308.5 Q168.6 310.6 172.4 316 Q175 323 175.1 331 Q174.6 340.5 172.2 348 L169.6 354.2 Q159 356 148 356 Q137 354.6 128 351 Q118.6 345 111.4 337.4 L108 330.4 L106 330 L100.3 331.7 Z" fill="#fdf8d8" stroke="#4f4b3c" stroke-width="0.7" stroke-linejoin="round"/>
<path d="M110.6 302.0 Q105.4 311 108.7 321.2 Q107.7 311 110.6 302.0 ZM116.0 309.6 Q127.5 301.2 139 302.9 Q141.2 304.3 139 305.7 Q127.5 305.0 116.0 309.6 ZM113.5 319.4 C123 317.2 139 322 147.6 335.3 C138 335.6 123 328.6 113.5 319.4 ZM113.4 325.8 Q129 342.5 152 347.2 Q160.5 332 162.0 315.8 Q159.4 330 150.2 341.4 Q130.5 338.2 113.4 325.8 Z" fill="#fafafa" stroke="#55524a" stroke-width="0.6" stroke-linejoin="round"/></g>
<path d="M215.0 255.7V569" stroke="#115a3a" stroke-width="0.85" stroke-dasharray="3.6 4.73" fill="none"/>
<path d="M443.8 255.7V569" stroke="#115a3a" stroke-width="0.85" stroke-dasharray="3.6 4.73" fill="none"/>
  <!-- script titles -->
<clipPath id="olclip"><rect x="0" y="400" width="100.3" height="60"/><rect x="107.5" y="400" width="93" height="60"/><rect x="458.3" y="400" width="93" height="60"/></clipPath>
<filter id="idf" x="-5%" y="-20%" width="110%" height="140%" color-interpolation-filters="sRGB"><feOffset dx="0" dy="0"/></filter>
<g font-family="'Liberation Sans',sans-serif" font-weight="bold" font-style="italic" font-size="30" stroke-linejoin="round" stroke-linecap="round" text-rendering="geometricPrecision" filter="url(#idf)">
  <text clip-path="url(#olclip)" font-size="29.2" x="77.4" y="438.3" textLength="128.6" lengthAdjust="spacingAndGlyphs" fill="#2a5f49" stroke="#2a5f49" stroke-width="8.4">Christmas</text>
  <text font-size="29.2" x="77.4" y="438.3" textLength="128.6" lengthAdjust="spacingAndGlyphs" fill="#25a572" stroke="#25a572" stroke-width="7.2">Christmas</text>
  <text font-size="29.2" x="77.4" y="438.3" textLength="128.6" lengthAdjust="spacingAndGlyphs" fill="#4f4b3c" stroke="#4f4b3c" stroke-width="2.1">Christmas</text>
  <text font-size="29.2" x="77.4" y="438.3" textLength="128.6" lengthAdjust="spacingAndGlyphs" fill="#fdf8d8" stroke="#fdf8d8" stroke-width="1.2">Christmas</text>
  <text clip-path="url(#olclip)" font-size="31.5" x="452.4" y="438.2" textLength="75.5" lengthAdjust="spacingAndGlyphs" fill="#2a5f49" stroke="#2a5f49" stroke-width="8.4">Merry</text>
  <text font-size="31.5" x="452.4" y="438.2" textLength="75.5" lengthAdjust="spacingAndGlyphs" fill="#25a572" stroke="#25a572" stroke-width="7.2">Merry</text>
  <text font-size="31.5" x="452.4" y="438.2" textLength="75.5" lengthAdjust="spacingAndGlyphs" fill="#4f4b3c" stroke="#4f4b3c" stroke-width="2.1">Merry</text>
  <text font-size="31.5" x="452.4" y="438.2" textLength="75.5" lengthAdjust="spacingAndGlyphs" fill="#fdf8d8" stroke="#fdf8d8" stroke-width="1.2">Merry</text>
</g>
<!-- selection box -->
<rect x="74.2" y="251.9" width="484.4" height="320.7" fill="none" stroke="#747474" stroke-width="1.05"/>
<!-- centre cross -->
<path d="M300 412.3H332.6M316.3 396.8V428" stroke="#9fd0b9" stroke-width="0.6" fill="none"/>
<!-- dimension labels -->
<g font-size="7.8" fill="#7a7a7a">
  <rect x="298.5" y="233.6" width="37" height="12.4" fill="#fff" fill-opacity="0.92"/>
  <text x="303.4" y="242.3">10.569"</text>
  <rect x="575" y="402.6" width="12" height="13" fill="#fff" fill-opacity="0.92"/>
  <text x="577.6" y="412.3">7"</text>
</g>
<!-- handles -->
<g fill="#4f5d68">
  <circle cx="64.7" cy="242.1" r="8.6"/><circle cx="568" cy="242.2" r="8.6"/>
  <circle cx="64.75" cy="582" r="8.6"/><circle cx="568.3" cy="582" r="8.6"/>
</g>
<g fill="none" stroke="#fff" stroke-width="1.25" stroke-linecap="round">
  <path d="M61 238.400L68.400 245.800M68.400 238.400L61 245.800"/>
  <path d="M571.200 239.600A4.200 4.200 0 1 0 572 243.400" stroke-width="1.35"/>
  <path d="M565.600 579.300L571 584.700" stroke-width="1.1"/>
  <rect x="61.100" y="580.800" width="7.300" height="5.300" rx="0.700" stroke-width="1.15"/>
  <path d="M62.700 580.600v-1.400a2.050 2.050 0 0 1 4.100 0v1.400" stroke-width="1.15"/>
</g>
<g fill="#fff">
  <path d="M569.800 238.100l3.300 -0.200l-0.300 3.400z"/>
  <path d="M564.300 578l3.400 0.200l-3.200 3.200zM572.300 586l-3.400 -0.200l3.200 -3.200z"/>
  <path d="M64.100 582.300l1.700 1.100l-1.700 1.100z"/>
</g>
<!-- scrollbars -->
<rect x="695.6" y="200.4" width="11" height="448" fill="#f7f7f7"/>
<rect x="695.6" y="200.6" width="10.4" height="40.600" fill="#c1c1c1"/>
<rect x="0" y="648" width="707" height="18.500" fill="#f8f8f8"/>
<rect x="0" y="659" width="10.600" height="6.600" fill="#bdbdbd"/>
<!-- zoom control -->
<rect x="-2" y="622.500" width="24" height="20" rx="2.500" fill="#efefef" fill-opacity="0.85"/>
<text x="-1.500" y="637.500" font-size="10.500" fill="#adadad">%</text>
<circle cx="13.400" cy="632.600" r="4.300" fill="none" stroke="#c4c4c4" stroke-width="0.8"/>
<path d="M11 632.600h4.800M13.400 630.200v4.800" stroke="#c4c4c4" stroke-width="0.8"/>

</svg>
</div>

<div id="panel" class="abs">
<!-- coordinates relative to panel origin (706.5,153.5) -->
<div class="abs" style="left:0;top:0;width:94px;height:13.6px;background:#e0e0e0;"></div>
<div class="abs" style="left:0;top:13.4px;width:83px;height:0.9px;background:#858585;"></div>
<div class="abs" style="left:83px;top:13.4px;width:11px;height:0.8px;background:#c4c4c4;"></div>
<span class="abs" style="left:30.5px;top:1.4px;font-size:7.5px;line-height:10px;color:#4a4f55;">Layers</span>
<div class="abs" style="left:0;top:14.2px;width:94px;height:32.6px;background:#dadada;"></div>
<svg class="abs" style="left:12px;top:18px" width="14" height="12" viewBox="0 0 14 12"><g fill="none" stroke="#a9a9a9" stroke-width="0.8"><rect x="1.2" y="1.2" width="11.2" height="9.6"/><rect x="3.4" y="3.2" width="4.6" height="4"/><circle cx="8.4" cy="6.6" r="2.2"/></g><g fill="#a9a9a9"><rect x="0.3" y="0.3" width="1.8" height="1.8"/><rect x="11.5" y="0.3" width="1.8" height="1.8"/><rect x="0.3" y="9.9" width="1.8" height="1.8"/><rect x="11.5" y="9.9" width="1.8" height="1.8"/></g></svg>
<svg class="abs" style="left:53.5px;top:18px" width="12" height="12" viewBox="0 0 12 12"><g fill="none" stroke="#b0b0b0" stroke-width="0.8"><rect x="1" y="1.6" width="5.4" height="5.4"/><rect x="4.6" y="4.8" width="6" height="6"/></g><g fill="#b0b0b0"><rect x="0.2" y="0.8" width="1.5" height="1.5"/><rect x="5.6" y="0.8" width="1.5" height="1.5"/><rect x="0.2" y="6.2" width="1.5" height="1.5"/></g></svg>
<span class="g" style="left:9.5px;top:33px;">Group</span>
<span class="g" style="left:46px;top:33px;">UnGroup</span>
<span class="g" style="left:91.3px;top:33px;color:#3a3f44;">Duplicate</span>

<!-- item 1 -->
<div class="tri" style="left:6.5px;top:56.3px;"></div>
<span class="t" style="left:18.2px;top:50px;">Merry_christmas</span>
<span class="c" style="left:43.5px;top:74px;">Basic Cut</span>
<div class="sep" style="left:0;top:95px;"></div>
<!-- item 2 -->
<div class="tri" style="left:6.5px;top:103.8px;"></div>
<span class="t" style="left:18.2px;top:97.5px;">Merry_christmas</span>
<span class="c" style="left:43.5px;top:121.5px;">Basic Cut</span>
<div class="sep" style="left:0;top:142.5px;"></div>
<!-- item 3 -->
<div class="tri" style="left:6.5px;top:151.3px;"></div>
<span class="t" style="left:18.2px;top:145px;">Merry_christmas</span>
<span class="c" style="left:43.5px;top:169px;">Basic Cut</span>
<div class="sep" style="left:0;top:190px;"></div>
<!-- item 4 -->
<div class="tri" style="left:6.5px;top:198.8px;"></div>
<span class="t" style="left:18.2px;top:192.5px;">Merry_christmas</span>
<span class="c" style="left:43.5px;top:217px;">Basic Cut</span>

<!-- thumbnails -->
<svg class="abs" style="left:18.3px;top:70.3px" width="18" height="18.3" viewBox="99 279 77 78"><g transform="matrix(-1 0 0 1 275 0)"><path d="M100.3 292.0 L108 293.0 L112 294.3 Q118.5 289.4 126 284.6 Q135.5 280.6 143.2 280.2 Q151 281 156.2 285.6 Q160.6 291 162.1 298 Q163 304 162.1 308.1 L163 308.5 Q168.6 310.6 172.4 316 Q175 323 175.1 331 Q174.6 340.5 172.2 348 L169.6 354.2 Q159 356 148 356 Q137 354.6 128 351 Q118.6 345 111.4 337.4 L108 330.4 L106 330 L100.3 331.7 Z" fill="#fbf6cf" stroke="#d8d2a4" stroke-width="2.2"/><path d="M110.6 302.0 Q105.4 311 108.7 321.2 Q107.7 311 110.6 302.0 ZM116.0 309.6 Q127.5 301.2 139 302.9 Q141.2 304.3 139 305.7 Q127.5 305.0 116.0 309.6 ZM113.5 319.4 C123 317.2 139 322 147.6 335.3 C138 335.6 123 328.6 113.5 319.4 ZM113.4 325.8 Q129 342.5 152 347.2 Q160.5 332 162.0 315.8 Q159.4 330 150.2 341.4 Q130.5 338.2 113.4 325.8 Z" fill="#eeeadb" stroke="#cfc9a0" stroke-width="1.6"/></g></svg>
<svg class="abs" style="left:18.3px;top:118.3px" width="18" height="18.3" viewBox="99 279 77 78"><path d="M100.3 292.0 L108 293.0 L112 294.3 Q118.5 289.4 126 284.6 Q135.5 280.6 143.2 280.2 Q151 281 156.2 285.6 Q160.6 291 162.1 298 Q163 304 162.1 308.1 L163 308.5 Q168.6 310.6 172.4 316 Q175 323 175.1 331 Q174.6 340.5 172.2 348 L169.6 354.2 Q159 356 148 356 Q137 354.6 128 351 Q118.6 345 111.4 337.4 L108 330.4 L106 330 L100.3 331.7 Z" fill="#fbf6cf" stroke="#d8d2a4" stroke-width="2.2"/><path d="M110.6 302.0 Q105.4 311 108.7 321.2 Q107.7 311 110.6 302.0 ZM116.0 309.6 Q127.5 301.2 139 302.9 Q141.2 304.3 139 305.7 Q127.5 305.0 116.0 309.6 ZM113.5 319.4 C123 317.2 139 322 147.6 335.3 C138 335.6 123 328.6 113.5 319.4 ZM113.4 325.8 Q129 342.5 152 347.2 Q160.5 332 162.0 315.8 Q159.4 330 150.2 341.4 Q130.5 338.2 113.4 325.8 Z" fill="#eeeadb" stroke="#cfc9a0" stroke-width="1.6"/></svg>
<span class="abs" style="left:18.6px;top:171.6px;font-size:4.6px;line-height:6px;font-weight:bold;font-style:italic;color:#d3d0b4;letter-spacing:-0.1px;">Christmas</span>
<span class="abs" style="left:18.4px;top:216.6px;font-size:8px;line-height:10px;font-weight:bold;font-style:italic;color:#d6d3b6;letter-spacing:-0.5px;">Merry</span>
<!-- attach -->
<div class="abs" style="left:0;top:237.7px;width:94px;height:96.3px;background:#dcdcdc;"></div>
<div class="tri" style="left:6.5px;top:246.5px;"></div>
<span class="t" style="left:18.2px;top:240.3px;">Attach</span>
<div class="sep" style="left:18.5px;top:257.5px;background:#cfcfcf;"></div>
<div class="tri" style="left:19.4px;top:266.5px;"></div>
<span class="t" style="left:30.8px;top:260.3px;">Merry_christmas</span>
<div class="sep" style="left:30.5px;top:277px;background:#cfcfcf;"></div>
<span class="c" style="left:56.3px;top:285.3px;">Basic Cut</span>
<div class="sep" style="left:30.5px;top:304.5px;background:#cfcfcf;"></div>
<span class="c" style="left:56.3px;top:312.3px;">Basic Cut</span>
<svg class="abs" style="left:31px;top:311px" width="19" height="14" viewBox="0 0 19 14"><rect x="0.5" y="0.5" width="18" height="13" fill="#2aa873"/><g fill="#bfe6d3"><rect x="1.2" y="1.6" width="2.6" height="3.4"/><rect x="1.2" y="8.8" width="2.6" height="3.4"/><rect x="15.2" y="1.6" width="2.6" height="3.4"/><rect x="15.2" y="8.8" width="2.6" height="3.4"/></g><path d="M0 7h3M16 7h3" stroke="#e9f3d0" stroke-width="1.2"/></svg>

<!-- bottom -->
<div class="sep" style="left:0;top:441px;background:#e6e6e6;"></div>
<div class="abs" style="left:6.8px;top:445.8px;width:33.4px;height:23.2px;box-sizing:border-box;border:0.8px solid #9b9b9b;border-radius:2px;background:#fff;"></div>
<span class="abs" style="left:46.7px;top:452.6px;font-size:6.4px;line-height:9px;color:#30363b;white-space:nowrap;">Blank Canvas</span>
<div class="abs" style="left:0;top:472.8px;width:94px;height:32.4px;background:#d9d9d9;"></div>
<div class="abs" style="left:0;top:505.2px;width:94px;height:6.8px;background:#dcdcdc;border-top:0.6px solid #c6c6c6;box-sizing:border-box;"></div>
<span class="g" style="left:7.3px;top:491.6px;">Slice</span>
<span class="g" style="left:35.5px;top:491.6px;">Weld</span>
<span class="g" style="left:64.6px;top:491.6px;color:#2d3237;">Detach</span>
<svg class="abs" style="left:8px;top:476px" width="13" height="13" viewBox="0 0 13 13"><g fill="none" stroke="#b2b2b2" stroke-width="0.9"><path d="M1 1h6v3.2M1 1v6h3"/><circle cx="8" cy="8" r="3.6"/><path d="M4.6 8V4.6H8"/></g></svg>
<svg class="abs" style="left:37px;top:476px" width="13" height="13" viewBox="0 0 13 13"><path d="M1 1.2h6v3.2a3.7 3.7 0 1 1-3.6 3.4H1z" fill="none" stroke="#b6b6b6" stroke-width="0.9"/></svg>
<svg class="abs" style="left:69px;top:475.5px" width="14" height="14" viewBox="0 0 14 14"><g fill="none" stroke="#2d3237" stroke-linecap="round"><circle cx="3.900" cy="3.400" r="1.900" stroke-width="1.250"/><path d="M6.900 6.200l2.200-1.700a2.100 2.100 0 0 1 2.600 3.300l-2.200 1.700a2.100 2.100 0 0 1-2.600-3.300z" stroke-width="1.250"/><path d="M1.200 2.600L11.400 11.300" stroke-width="1.100"/></g></svg>

</div>
</body>
</html>
